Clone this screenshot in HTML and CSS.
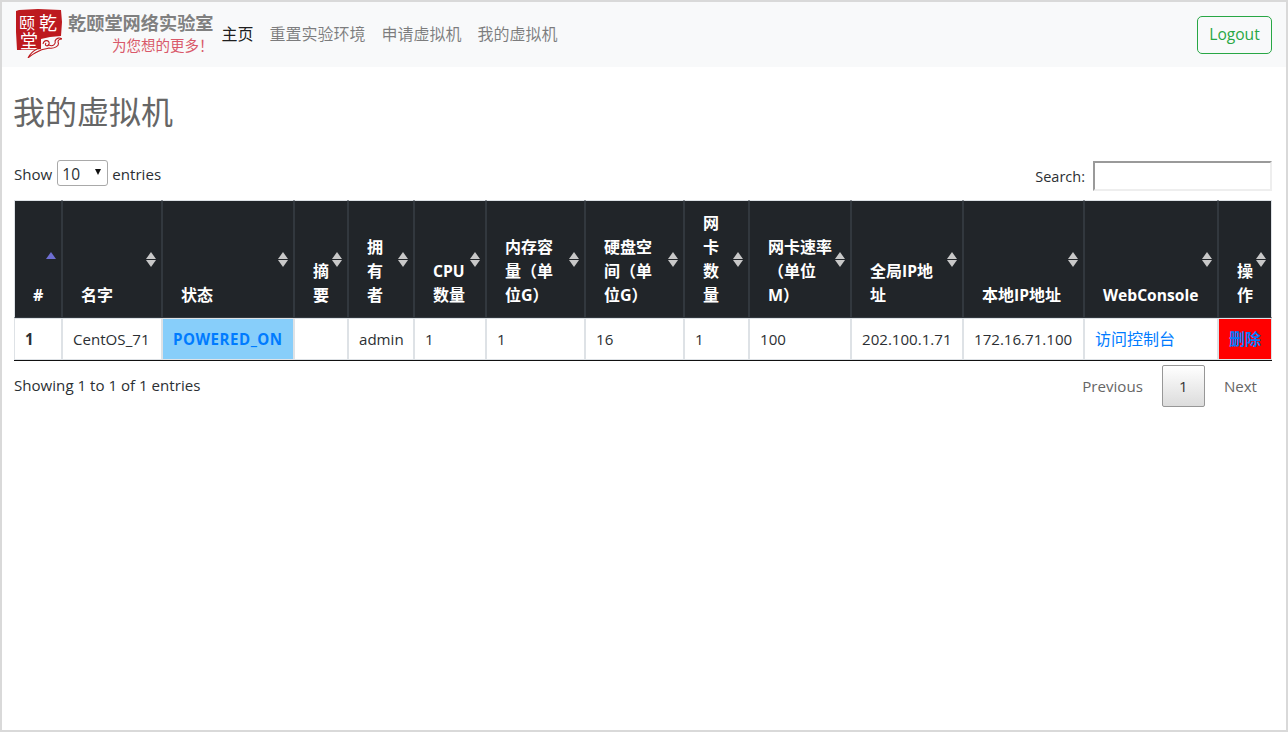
FILE: index.html
```html
<!DOCTYPE html>
<html lang="zh">
<head>
<meta charset="utf-8">
<title>我的虚拟机</title>
<link rel="stylesheet" href="styles.css">
</head>
<body>
<div class="page">
  <nav class="navbar">
    <a class="brand" href="#">
      <svg class="seal" viewBox="0 0 48 50" width="48" height="50" aria-hidden="true">
        <path d="M2 3 L5 2 L24 1 L47 2 L48 14 L47 28 L36 29 L27 31 L27 41 L18 42 L3 42 L2 24 Z" fill="#bd1a1f"/>
        <text class="seal-char" x="5" y="21" font-size="16">颐</text>
        <text class="seal-char" x="25" y="22" font-size="18">乾</text>
        <text class="seal-char" x="6" y="40" font-size="18">堂</text>
        <path d="M29 36 C30 31 36 32 35 36 C34 39 30 38 32 35 M35 37 C39 39 42 36 41 33 C42 30 46 29 48 31 C46 31 44 32 44 34 C46 38 40 41 35 40 C32 41 29 41 27 42 C23 44 18 46 14 50 C16 46 19 43 23 41" fill="none" stroke="#bd1a1f" stroke-width="1.1"/>
      </svg>
      <span class="brand-text">
        <span class="brand-name">乾颐堂网络实验室</span>
        <span class="brand-sub">为您想的更多！</span>
      </span>
    </a>
    <ul class="nav">
      <li><a class="nav-link active" href="#">主页</a></li>
      <li><a class="nav-link" href="#">重置实验环境</a></li>
      <li><a class="nav-link" href="#">申请虚拟机</a></li>
      <li><a class="nav-link" href="#">我的虚拟机</a></li>
    </ul>
    <button class="logout" type="button">Logout</button>
  </nav>

  <main class="content">
    <h2 class="title">我的虚拟机</h2>

    <div class="controls">
      <label class="length">Show
        <span class="select"><span>10</span><i class="caret"></i></span>
        entries</label>
      <label class="search">Search: <input type="search" class="search-input"></label>
    </div>

    <table class="vm-table">
      <colgroup>
        <col class="c1"><col class="c2"><col class="c3"><col class="c4"><col class="c5"><col class="c6"><col class="c7">
        <col class="c8"><col class="c9"><col class="c10"><col class="c11"><col class="c12"><col class="c13"><col class="c14">
      </colgroup>
      <thead>
        <tr>
          <th class="sorted">#</th>
          <th>名字</th>
          <th>状态</th>
          <th>摘要</th>
          <th>拥有者</th>
          <th><span class="en">CPU</span> 数量</th>
          <th>内存容量（单位G）</th>
          <th>硬盘空间（单位G）</th>
          <th>网卡数量</th>
          <th>网卡速率（单位M）</th>
          <th>全局<span class="en">IP</span>地址</th>
          <th>本地<span class="en">IP</span>地址</th>
          <th class="nowrap"><span class="en">WebConsole</span></th>
          <th>操作</th>
        </tr>
      </thead>
      <tbody>
        <tr>
          <td class="strong">1</td>
          <td>CentOS_71</td>
          <td class="status">POWERED_ON</td>
          <td></td>
          <td>admin</td>
          <td>1</td>
          <td>1</td>
          <td>16</td>
          <td>1</td>
          <td>100</td>
          <td>202.100.1.71</td>
          <td>172.16.71.100</td>
          <td><a class="link" href="#">访问控制台</a></td>
          <td class="danger"><a class="link" href="#">删除</a></td>
        </tr>
      </tbody>
    </table>

    <div class="footer-row">
      <div class="info">Showing 1 to 1 of 1 entries</div>
      <div class="pagination">
        <a class="page-link" href="#">Previous</a>
        <a class="page-link current" href="#">1</a>
        <a class="page-link last" href="#">Next</a>
      </div>
    </div>
  </main>
</div>
</body>
</html>
```

FILE: styles.css
```css
* { box-sizing: border-box; }
html, body { margin: 0; padding: 0; height: 100%; }
body {
  font-family: "Open Sans", "Noto Sans CJK SC", sans-serif;
  font-size: 15.1px;
  line-height: 24px;
  color: #2b2f33;
  background: #fff;
  overflow: hidden;
}
a { text-decoration: none; }
.page { height: 732px; border: 2px solid #d9d9d9; }

.navbar {
  display: flex;
  align-items: center;
  height: 65px;
  padding: 0 14px 0 12px;
  background: #f8f9fa;
}
.brand { display: flex; align-items: flex-start; align-self: flex-start; height: 50px; margin-top: 6px; }
.seal { display: block; width: 48px; height: 50px; }
.seal-char { fill: #fff; font-family: "Noto Sans CJK SC", sans-serif; font-weight: 400; }
.brand-text { display: flex; flex-direction: column; margin-left: 6px; margin-top: 3px; }
.brand-name { font-size: 18.2px; line-height: 25px; font-weight: 700; color: #808080; white-space: nowrap; }
.brand-sub { font-size: 14.5px; line-height: 22px; color: #d9596a; text-align: right; margin-top: -1px; white-space: nowrap; }

.nav { display: flex; list-style: none; margin: -2px auto 0 0; padding: 0; }
.nav-link { display: block; padding: 8px; font-size: 16px; color: rgba(0,0,0,.5); }
.nav-link.active { color: rgba(0,0,0,.9); }
.logout {
  width: 75px;
  height: 38px;
  padding: 0 0 2px;
  font: inherit;
  font-size: 15.6px;
  color: #28a745;
  background: transparent;
  border: 1px solid #28a745;
  border-radius: 5px;
}

.content { padding: 0 14px 0 12px; }
.title { margin: 0 0 0 -1px; padding-top: 26px; font-size: 32px; line-height: 38px; font-weight: 400; color: #666; }

.controls { display: flex; justify-content: space-between; align-items: flex-start; margin-top: 29px; height: 40px; }
.length { display: flex; align-items: flex-start; gap: 5px; height: 26px; line-height: 28px; }
.select {
  display: flex;
  align-items: center;
  justify-content: space-between;
  width: 51px;
  height: 26px;
  margin-right: -1px;
  padding: 1px 6px 0 4px;
  font-size: 15.5px;
  line-height: 24px;
  background: #fff;
  border: 1px solid #a9a9a9;
  border-radius: 3px;
}
.caret { width: 0; height: 0; border: 3.5px solid transparent; border-top: 6px solid #111; border-bottom: 0; margin-top: -3px; }
.search { display: flex; align-items: flex-start; gap: 8px; height: 30px; margin-top: 1px; font-size: 14.5px; line-height: 32px; }
.search-input {
  width: 179px;
  height: 30px;
  margin: 0;
  background: #fff;
  border-style: solid;
  border-width: 2px;
  border-color: #9a9a9a #eee #eee #9a9a9a;
}

.vm-table {
  width: 1258px;
  table-layout: fixed;
  border-collapse: separate;
  border-spacing: 0;
  border-bottom: 1px solid #111;
}
.c1 { width: 48px; } .c2 { width: 100px; } .c3 { width: 132px; } .c4 { width: 54px; }
.c5 { width: 66px; } .c6 { width: 72px; } .c7 { width: 99px; } .c8 { width: 99px; }
.c9 { width: 65px; } .c10 { width: 102px; } .c11 { width: 112px; } .c12 { width: 121px; }
.c13 { width: 134px; } .c14 { width: 54px; }

.vm-table th {
  position: relative;
  padding: 10px 18px;
  font-size: 16px;
  font-weight: 700;
  color: #fff;
  text-align: left;
  vertical-align: bottom;
  background: #212529;
  border: 1px solid #32383e;
}
.vm-table th:first-child { border-color: #dee2e6 #32383e #32383e #dee2e6; }
.vm-table th { border-top-color: #dee2e6; }
.vm-table th:last-child { border-right-color: #dee2e6; }
.vm-table th.nowrap { white-space: nowrap; }
.en { font-size: 15.6px; }
.vm-table th::before,
.vm-table th::after {
  content: "";
  position: absolute;
  right: 5px;
  width: 0;
  height: 0;
  border-left: 5px solid transparent;
  border-right: 5px solid transparent;
}
.vm-table th::before { top: 50%; margin-top: -7px; border-bottom: 7px solid #c8c8c8; }
.vm-table th::after { top: 50%; margin-top: 1px; border-top: 7px solid #c8c8c8; }
.vm-table th.sorted::before { border-bottom-color: #6e6ed2; }
.vm-table th.sorted::after { display: none; }

.vm-table td {
  padding: 8px 10px;
  height: 42px;
  white-space: nowrap;
  background: #fff;
  border: 1px solid #dee2e6;
}
.strong { font-weight: 700; }
.vm-table .status { color: #007bff; font-weight: 700; letter-spacing: .5px; background: #87cefa; }
.vm-table .danger { background: #f00; font-weight: 700; }
.link { color: #007bff; font-size: 16px; }

.footer-row { display: flex; justify-content: space-between; align-items: flex-start; }
.info { padding-top: 12px; }
.pagination { display: flex; align-items: center; padding-top: 4px; }
.page-link { padding: 8px 18px; color: #666; border: 1px solid transparent; border-radius: 2px; line-height: 24px; }
.page-link.last { padding-right: 14px; }
.page-link.current {
  width: 43px;
  height: 42px;
  padding: 8px 0;
  text-align: center;
  color: #333;
  border-color: #979797;
  background: linear-gradient(#fff, #dcdcdc);
}
```
